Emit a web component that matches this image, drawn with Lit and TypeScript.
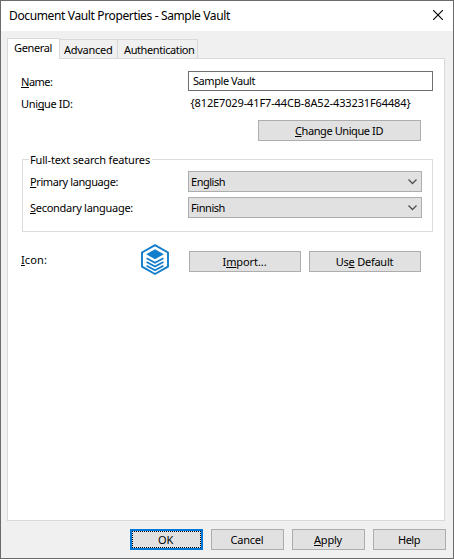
import { LitElement, html, css, nothing } from "lit";
import { customElement, property } from "lit/decorators.js";

/** Text label with an optional mnemonic letter, tracked to a given width. */
@customElement("ui-label")
class UiLabel extends LitElement {
  @property() text = "";
  @property() key = "";
  @property({ type: Number }) width = 0;

  static styles = css`
    :host { display: inline-block; white-space: pre; }
    .key { text-decoration: underline; text-decoration-thickness: 1px; text-underline-offset: 1px; text-decoration-skip-ink: none; }
  `;

  firstUpdated() {
    const span = this.renderRoot.querySelector(".text") as HTMLElement;
    if (!this.width) return;
    const natural = span.getBoundingClientRect().width;
    span.style.letterSpacing = `${(this.width - natural) / this.text.length}px`;
  }

  render() {
    const i = this.key ? this.text.indexOf(this.key) : -1;
    const content = i < 0
      ? this.text
      : html`${this.text.slice(0, i)}<span class="key">${this.key}</span>${this.text.slice(i + 1)}`;
    return html`<span class="text">${content}</span>`;
  }
}

@customElement("ui-button")
class UiButton extends LitElement {
  @property() text = "";
  @property() key = "";
  @property({ type: Number }) width = 0;
  @property({ type: Boolean, reflect: true }) primary = false;

  static styles = css`
    :host { display: block; height: 21px; box-sizing: border-box; }
    .button {
      display: flex; align-items: center; justify-content: center;
      height: 21px; width: 100%; box-sizing: border-box;
      border: 1px solid #adadad; background: #e1e1e1; padding: 0 1px 1px 0;
      line-height: 15px;
    }
    :host([primary]) .button { border: 2px solid #0078d7; padding: 0; }
    :host([primary]) .focus {
      display: flex; align-items: center; justify-content: center;
      width: 100%; height: 17px; box-sizing: border-box; border: 1px dotted #000; padding: 0 2px 1px 0;
    }
  `;

  render() {
    return html`<div class="button" role="button"><div class="focus">
      <ui-label .text=${this.text} .key=${this.key} .width=${this.width}></ui-label></div></div>`;
  }
}

@customElement("ui-select")
class UiSelect extends LitElement {
  @property() value = "";
  @property({ type: Number }) width = 0;

  static styles = css`
    :host { display: block; width: 234px; }
    .box {
      display: flex; align-items: center; justify-content: space-between;
      height: 21px; box-sizing: border-box; padding: 0 4px 0 2px;
      border: 1px solid #adadad; background: #e1e1e1; line-height: 15px;
    }
    svg { display: block; }
  `;

  render() {
    return html`<div class="box">
      <ui-label .text=${this.value} .width=${this.width}></ui-label>
      <svg width="9" height="6" viewBox="0 0 9 6"><path d="M.5 .5 4.5 4.5 8.5 .5" fill="none" stroke="#505050" stroke-width="1.3"/></svg>
    </div>`;
  }
}

@customElement("app-root")
class AppRoot extends LitElement {
  static styles = css`
    :host { display: block; font: 11px/15px "Noto Sans", "Open Sans", sans-serif; color: #000; }
    .window {
      width: 454px; height: 559px; box-sizing: border-box;
      border: 1px solid #6b6b6b; background: #f0f0f0;
      display: flex; flex-direction: column;
    }
    .title {
      height: 30px; flex: none; background: #fff; display: flex; box-sizing: border-box;
      align-items: center; justify-content: space-between; padding: 0 10px 0 8px;
      font-size: 12px; line-height: 18px;
    }
    .title svg { display: block; margin-top: -2px; }
    .tabs { display: flex; align-items: flex-end; height: 21px; margin: 7px 0 -1px 6px; flex: none; }
    .tab {
      box-sizing: border-box; height: 19px; border: 1px solid #d9d9d9; border-bottom: 0;
      margin-bottom: 1px; margin-left: -1px; background: #f0f0f0; padding: 2px 0 0 6px;
    }
    .tab.active { height: 21px; width: 53px; margin: 0; background: #fff; z-index: 1; padding: 1px 0 0 6px; }
    .advanced { width: 59px; padding-left: 4px; }
    .auth { width: 81px; padding-left: 6px; }
    .pane {
      flex: none; height: 463px; width: 438px; margin-left: 6px; box-sizing: border-box;
      background: #fff; border: 1px solid #d9d9d9; padding: 12px 11px 0 13px;
    }
    .row { display: flex; }
    .caption { width: 167px; flex: none; }
    .name { height: 20px; }
    .name .caption { padding-top: 3px; }
    .input { flex: 1; box-sizing: border-box; height: 20px; border: 1px solid #6f6f6f; padding: 1px 0 0 4px; }
    .uid { height: 29px; box-sizing: border-box; padding-top: 4px; }
    .uid .caption { padding-top: 1px; width: 169.5px; }
    .change { width: 163px; margin-left: 237px; }
    fieldset {
      margin: 11px 0 0 1px; padding: 0 10px 0 7px; height: 80px; width: 411px;
      box-sizing: border-box; border: 1px solid #dcdcdc;
    }
    legend { padding: 0 2px 0 1px; height: 15px; margin-left: -1px; }
    .language { height: 26px; position: relative; top: 4px; }
    .language .caption { width: 158px; padding-top: 3px; }
    .icons { margin-top: 11px; align-items: flex-start; }
    .icons .caption { width: 120px; padding-top: 9px; }
    .logo { display: block; width: 28px; height: 32px; margin-top: 1px; }
    .wide { width: 112px; margin: 8px 0 0 20px; }
    .wide + .wide { margin-left: 8px; }
    .footer { display: flex; gap: 8px; justify-content: flex-end; padding: 8px 7px 0 0; }
    .footer ui-button { width: 73px; }
  `;

  private label(text: string, width: number, key = "") {
    return html`<ui-label .text=${text} .width=${width} .key=${key}></ui-label>`;
  }

  private button(cls: string, text: string, width: number, key = "", primary = false) {
    return html`<ui-button class=${cls || nothing} .text=${text} .width=${width} .key=${key} .primary=${primary}></ui-button>`;
  }

  render() {
    return html`<div class="window">
      <div class="title">
        ${this.label("Document Vault Properties - Sample Vault", 221)}
        <svg width="10" height="10" viewBox="0 0 10 10"><path d="M0 0 10 10M10 0 0 10" stroke="#000" stroke-width="1.1"/></svg>
      </div>
      <div class="tabs">
        <div class="tab active">${this.label("General", 38)}</div>
        <div class="tab advanced">${this.label("Advanced", 48.5)}</div>
        <div class="tab auth">${this.label("Authentication", 70.5)}</div>
      </div>
      <div class="pane">
        <div class="row name">
          <div class="caption">${this.label("Name:", 31.5, "N")}</div>
          <div class="input">${this.label("Sample Vault", 62)}</div>
        </div>
        <div class="row uid">
          <div class="caption">${this.label("Unique ID:", 51.5, "q")}</div>
          ${this.label("{812E7029-41F7-44CB-8A52-433231F64484}", 220)}
        </div>
        ${this.button("change", "Change Unique ID", 88, "C")}
        <fieldset>
          <legend>${this.label("Full-text search features", 120)}</legend>
          <div class="row language">
            <div class="caption">${this.label("Primary language:", 88, "P")}</div>
            <ui-select value="English" .width=${34}></ui-select>
          </div>
          <div class="row language">
            <div class="caption">${this.label("Secondary language:", 103, "S")}</div>
            <ui-select value="Finnish" .width=${34}></ui-select>
          </div>
        </fieldset>
        <div class="row icons">
          <div class="caption">${this.label("Icon:", 26, "I")}</div>
          <svg class="logo" viewBox="0 0 28 32">
            <path d="M14 1.2 27 8.5V22.7L14 30 1 22.7V8.5Z" fill="none" stroke="#117dcb" stroke-width="1.9"/>
            <path d="M14 5.3 22.8 10.2 14 15.2 5.2 10.2Z" fill="#117dcb"/>
            <path d="M5.6 14.2 14 18.7 22.4 14.2M5.6 18 14 22.5 22.4 18M5.6 21.8 14 26.3 22.4 21.8" fill="none" stroke="#117dcb" stroke-width="1.8"/>
          </svg>
          ${this.button("wide", "Import...", 44, "m")}
          ${this.button("wide", "Use Default", 57.5, "e")}
        </div>
      </div>
      <div class="footer">
        ${this.button("", "OK", 15, "", true)}
        ${this.button("", "Cancel", 33)}
        ${this.button("", "Apply", 28, "A")}
        ${this.button("", "Help", 22)}
      </div>
    </div>`;
  }
}
